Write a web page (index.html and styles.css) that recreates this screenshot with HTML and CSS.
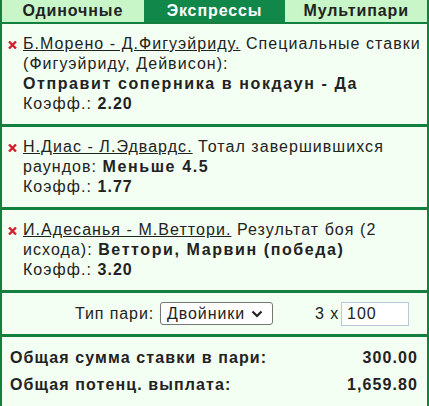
FILE: index.html
```html
<!DOCTYPE html>
<html lang="ru">
<head>
<meta charset="utf-8">
<link rel="stylesheet" href="styles.css">
</head>
<body>
<div class="slip">
  <div class="tabs">
    <div class="tab">Одиночные</div>
    <div class="tab active">Экспрессы</div>
    <div class="tab">Мультипари</div>
  </div>
  <div class="item">
    <svg class="del" width="9" height="8" viewBox="0 0 9 8"><path d="M1 0.5L8 7.5M8 0.5L1 7.5" stroke="#d3202e" stroke-width="2.4"/></svg>
    <div class="txt"><a class="ev">Б.Морено - Д.Фигуэйриду.</a> Специальные ставки (Фигуэйриду, Дейвисон): <b class="sel">Отправит соперника в нокдаун - Да</b><br>Коэфф.: <b>2.20</b></div>
  </div>
  <div class="item">
    <svg class="del" width="9" height="8" viewBox="0 0 9 8"><path d="M1 0.5L8 7.5M8 0.5L1 7.5" stroke="#d3202e" stroke-width="2.4"/></svg>
    <div class="txt"><a class="ev">Н.Диас - Л.Эдвардс.</a> Тотал завершившихся раундов: <b class="sel">Меньше 4.5</b><br>Коэфф.: <b>1.77</b></div>
  </div>
  <div class="item">
    <svg class="del" width="9" height="8" viewBox="0 0 9 8"><path d="M1 0.5L8 7.5M8 0.5L1 7.5" stroke="#d3202e" stroke-width="2.4"/></svg>
    <div class="txt"><a class="ev">И.Адесанья - М.Веттори.</a> Результат боя (2 исхода): <b class="sel">Веттори, Марвин (победа)</b><br>Коэфф.: <b>3.20</b></div>
  </div>
  <div class="bettype">
    <span class="lbl">Тип пари:</span>
    <div class="select">Двойники
      <svg width="12" height="8" viewBox="0 0 12 8"><path d="M1.5 1.5L6 6L10.5 1.5" fill="none" stroke="#222" stroke-width="2.2"/></svg>
    </div>
    <span class="mult">3 x</span>
    <div class="input">100</div>
  </div>
  <div class="totals">
    <div class="row"><span>Общая сумма ставки в пари:</span><span>300.00</span></div>
    <div class="row"><span>Общая потенц. выплата:</span><span>1,659.80</span></div>
  </div>
</div>
</body>
</html>
```
FILE: styles.css
```css
html, body { margin: 0; padding: 0; }
body {
  font-family: "Liberation Sans", Arial, sans-serif;
  font-size: 16px;
  letter-spacing: 1.05px;
  color: #222;
  background: #f3fff3;
  width: 429px;
  height: 406px;
  overflow: hidden;
}
.slip {
  width: 429px;
  height: 406px;
  box-sizing: border-box;
  border-left: 2px solid #13803f;
  border-right: 2px solid #13803f;
  background: #f3fff3;
}
.tabs {
  display: flex;
  height: 22px;
  border-bottom: 2px solid #13803f;
  background: #c8f6c8;
}
.tab {
  flex: 1;
  text-align: center;
  font-weight: bold;
  line-height: 22px;
  letter-spacing: 0.9px;
  color: #222;
}
.tab.active {
  background: #12874a;
  color: #fff;
}
.item {
  display: flex;
  align-items: flex-start;
  padding: 10px 6px 10px 6px;
  border-bottom: 3px solid #13803f;
  line-height: 20px;
}
.del { flex: none; margin-top: 7px; margin-right: 6px; }
.txt { flex: 1; }
.ev { text-decoration: underline; color: #222; }
.sel { white-space: nowrap; letter-spacing: 1.6px; }
.bettype {
  display: flex;
  align-items: center;
  height: 41px;
  border-bottom: 3px solid #13803f;
  letter-spacing: 0.9px;
}
.lbl { margin-left: 73px; margin-right: 6px; }
.select {
  display: flex;
  align-items: center;
  justify-content: space-between;
  box-sizing: border-box;
  width: 113px;
  height: 23px;
  padding: 0 9px 0 6px;
  border: 1px solid #767676;
  border-radius: 3px;
  background: #fff;
}
.mult { margin-left: 42px; margin-right: 2px; }
.input {
  box-sizing: border-box;
  width: 68px;
  height: 24px;
  line-height: 22px;
  padding-left: 5px;
  border: 1px solid #b6c9d6;
  background: #fff;
}
.totals {
  padding: 7px 9px 0 8px;
  font-weight: bold;
  letter-spacing: 1.1px;
}
.row {
  display: flex;
  justify-content: space-between;
  line-height: 27px;
}
```
